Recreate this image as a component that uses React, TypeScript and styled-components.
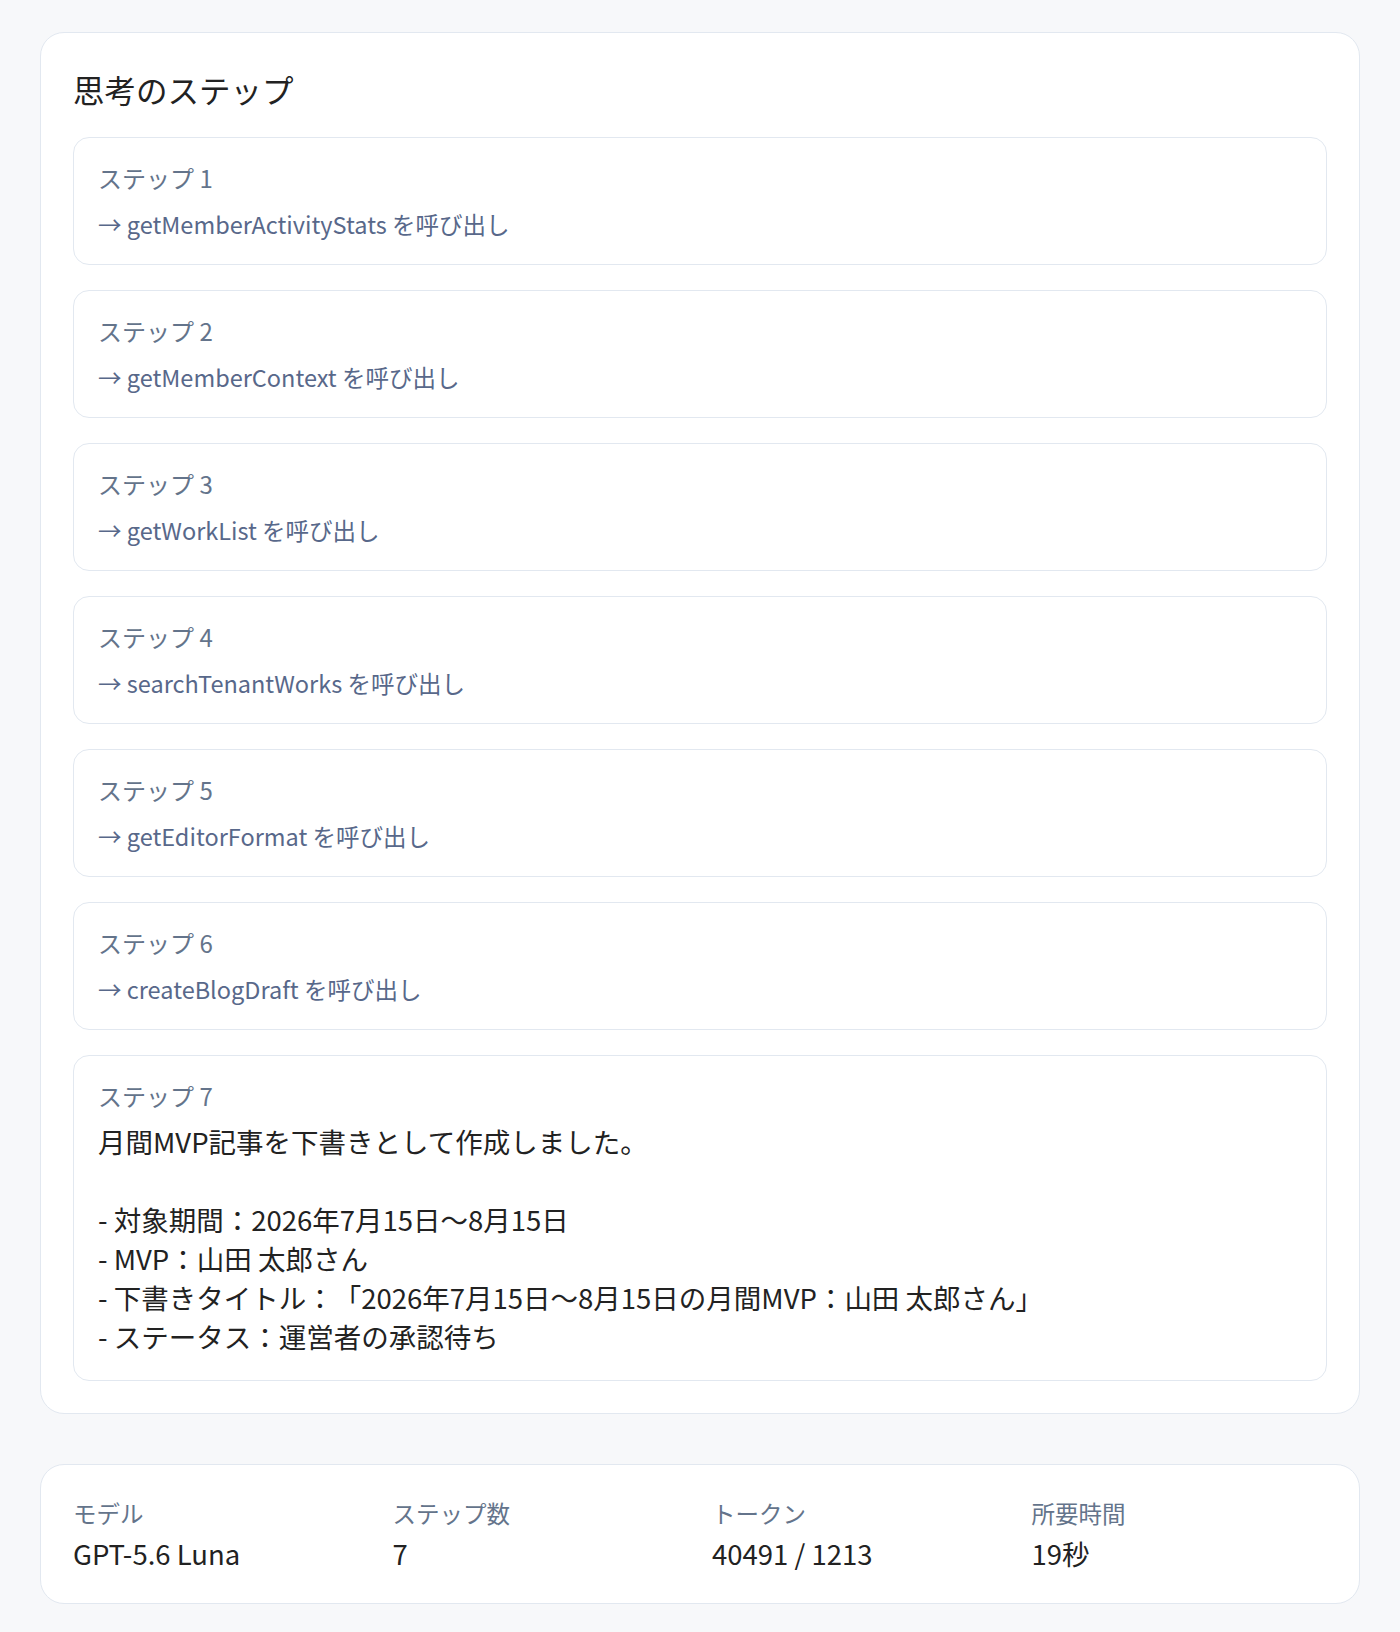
import React from "react";
import styled, { createGlobalStyle } from "styled-components";

const GlobalStyle = createGlobalStyle`
  html, body {
    margin: 0;
    padding: 0;
    background: #f7f8fa;
  }
  body {
    font-family: "Noto Sans CJK JP", "Noto Sans", "Liberation Sans", sans-serif;
    color: #222;
    text-spacing-trim: space-all;
  }
  * { box-sizing: border-box; }
`;

const Page = styled.main`
  display: flex;
  flex-direction: column;
  gap: 50px;
  padding: 32px 40px;
`;

const Panel = styled.section`
  background: #ffffff;
  border: 1px solid #e2e8f0;
  border-radius: 24px;
  padding: 32px;
`;

const Title = styled.h2`
  margin: 0;
  font-size: 31.5px;
  line-height: 48px;
  font-weight: 400;
  color: #222;
`;

const StepList = styled.div`
  display: flex;
  flex-direction: column;
  gap: 25px;
  margin-top: 24px;
`;

const StepCard = styled.article`
  border: 1px solid #e2e8f0;
  border-radius: 16px;
  padding: 24px;
`;

const StepLabel = styled.div`
  font-size: 24px;
  line-height: 32px;
  color: #64748b;
`;

const CallLine = styled.div`
  margin-top: 14px;
  font-size: 23.5px;
  line-height: 32px;
  color: #58688a;
`;

const StepText = styled.div`
  margin-top: 10px;
  font-size: 27.5px;
  line-height: 39px;
  color: #222;
  white-space: pre-wrap;
  text-spacing-trim: space-all;
`;

const MetaGrid = styled.div`
  display: grid;
  grid-template-columns: repeat(4, 1fr);
  gap: 24px;
`;

const MetaItem = styled.div`
  display: flex;
  flex-direction: column;
`;

const MetaLabel = styled.div`
  font-size: 23.5px;
  line-height: 32px;
  color: #64748b;
`;

const MetaValue = styled.div`
  margin-top: 7px;
  font-size: 27.5px;
  line-height: 35px;
  color: #222;
`;

type Step = { call?: string; text?: string };

const steps: Step[] = [
  { call: "getMemberActivityStats" },
  { call: "getMemberContext" },
  { call: "getWorkList" },
  { call: "searchTenantWorks" },
  { call: "getEditorFormat" },
  { call: "createBlogDraft" },
  {
    text:
      "月間MVP記事を下書きとして作成しました。\n\n- 対象期間：2026年7月15日〜8月15日\n- MVP：山田 太郎さん\n- 下書きタイトル：「2026年7月15日〜8月15日の月間MVP：山田 太郎さん」\n- ステータス：運営者の承認待ち",
  },
];

const meta = [
  { label: "モデル", value: "GPT-5.6 Luna" },
  { label: "ステップ数", value: "7" },
  { label: "トークン", value: "40491 / 1213" },
  { label: "所要時間", value: "19秒" },
];

export default function App() {
  return (
    <>
      <GlobalStyle />
      <Page>
        <Panel>
          <Title>思考のステップ</Title>
          <StepList>
            {steps.map((s, i) => (
              <StepCard key={i}>
                <StepLabel>ステップ {i + 1}</StepLabel>
                {s.call && <CallLine>→ {s.call} を呼び出し</CallLine>}
                {s.text && <StepText>{s.text}</StepText>}
              </StepCard>
            ))}
          </StepList>
        </Panel>
        <Panel>
          <MetaGrid>
            {meta.map((m) => (
              <MetaItem key={m.label}>
                <MetaLabel>{m.label}</MetaLabel>
                <MetaValue>{m.value}</MetaValue>
              </MetaItem>
            ))}
          </MetaGrid>
        </Panel>
      </Page>
    </>
  );
}
